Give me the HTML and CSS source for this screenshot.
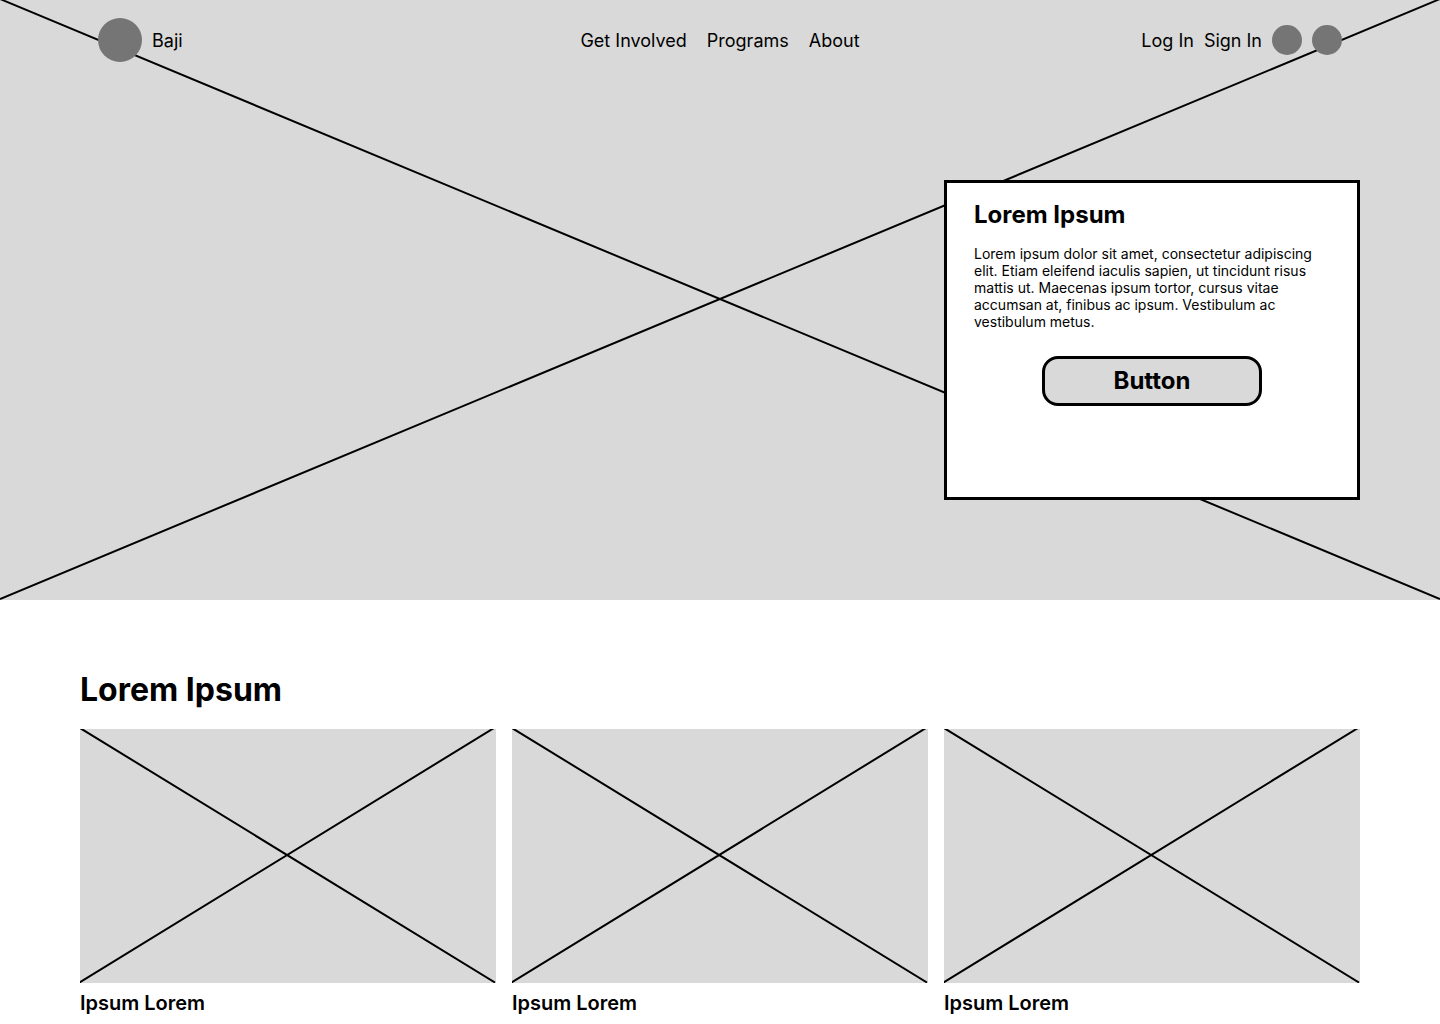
FILE: index.html
```html
<!DOCTYPE html>
<html lang="en">
<head>
<meta charset="utf-8">
<meta name="viewport" content="width=device-width, initial-scale=1">
<title>Baji</title>
<link rel="stylesheet" href="styles.css">
</head>
<body>
<div class="hero">
  <svg class="hero-image" viewBox="0 0 1440 600" preserveAspectRatio="none" aria-hidden="true">
    <path d="M0 -1L1440 599M0 599L1440 -1"/>
  </svg>
  <header class="site-header">
    <a class="brand" href="#"><span class="brand-logo"></span><span class="header-label">Baji</span></a>
    <nav class="main-nav" aria-label="Main">
      <a class="header-label" href="#">Get Involved</a>
      <a class="header-label" href="#">Programs</a>
      <a class="header-label" href="#">About</a>
    </nav>
    <div class="account">
      <a class="header-label" href="#">Log In</a>
      <a class="header-label" href="#">Sign In</a>
      <span class="dot"></span>
      <span class="dot"></span>
    </div>
  </header>
  <section class="promo">
    <h2 class="promo-title">Lorem Ipsum</h2>
    <p class="promo-text">Lorem ipsum dolor sit amet, consectetur adipiscing elit. Etiam eleifend iaculis sapien, ut tincidunt risus mattis ut. Maecenas ipsum tortor, cursus vitae accumsan at, finibus ac ipsum. Vestibulum ac vestibulum metus.</p>
    <button class="promo-button" type="button">Button</button>
  </section>
</div>
<main class="content">
  <h1 class="section-title">Lorem Ipsum</h1>
  <div class="cards">
    <article class="card">
      <svg class="card-image" viewBox="0 0 416 254" aria-hidden="true"><path d="M0 -1L415 253.5M-.5 253.5L414 -1"/></svg>
      <h3 class="card-title">Ipsum Lorem</h3>
    </article>
    <article class="card">
      <svg class="card-image" viewBox="0 0 416 254" aria-hidden="true"><path d="M0 -1L415 253.5M-.5 253.5L414 -1"/></svg>
      <h3 class="card-title">Ipsum Lorem</h3>
    </article>
    <article class="card">
      <svg class="card-image" viewBox="0 0 416 254" aria-hidden="true"><path d="M0 -1L415 253.5M-.5 253.5L414 -1"/></svg>
      <h3 class="card-title">Ipsum Lorem</h3>
    </article>
  </div>
</main>
</body>
</html>
```
FILE: styles.css
```css
* { box-sizing: border-box; }

body {
  margin: 0;
  background: #fff;
  color: #000;
  font-family: Inter, "Liberation Sans", sans-serif;
}

h1, h2, h3, p { margin: 0; }

a {
  color: inherit;
  text-decoration: none;
}

.hero {
  position: relative;
  isolation: isolate;
  display: flex;
  flex-direction: column;
  min-height: 600px;
  padding: 0 80px 100px;
  background: #d9d9d9;
}

.hero-image {
  position: absolute;
  inset: 0;
  z-index: -1;
  width: 100%;
  height: 100%;
}

.hero-image path,
.card-image path {
  fill: none;
  stroke: #000;
  stroke-width: 2;
}

.site-header {
  display: grid;
  grid-template-columns: 1fr auto 1fr;
  align-items: center;
  height: 80px;
  padding: 0 18px;
  font-size: 18px;
  line-height: 22px;
}

.header-label { padding-top: 2px; }

.brand,
.account {
  display: flex;
  align-items: center;
  gap: 10px;
}

.brand-logo {
  width: 44px;
  height: 44px;
  border-radius: 50%;
  background: #757575;
}

.main-nav {
  display: flex;
  gap: 20px;
}

.account { justify-content: flex-end; }

.dot {
  width: 30px;
  height: 30px;
  border-radius: 50%;
  background: #757575;
}

.promo {
  display: flex;
  flex-direction: column;
  align-self: flex-end;
  width: 416px;
  max-width: 100%;
  min-height: 320px;
  margin-top: 100px;
  padding: 17px 27px;
  border: 3px solid #000;
  background: #fff;
}

.promo-title {
  font-size: 24px;
  line-height: 30px;
}

.promo-text {
  margin-top: 15px;
  font-size: 14px;
  line-height: 17px;
}

.promo-button {
  align-self: center;
  width: 220px;
  height: 50px;
  margin-top: 26px;
  padding: 0;
  border: 3px solid #000;
  border-radius: 16px;
  background: #d9d9d9;
  color: #000;
  font: bold 24px/30px Inter, "Liberation Sans", sans-serif;
}

.content { padding: 70px 80px 8px; }

.section-title {
  font-size: 32px;
  line-height: 40px;
}

.cards {
  display: grid;
  grid-template-columns: repeat(3, 1fr);
  gap: 16px;
  margin-top: 19px;
}

.card-image {
  display: block;
  width: 100%;
  background: #d9d9d9;
}

.card-title {
  margin-top: 8px;
  font-size: 20px;
  font-weight: 600;
  line-height: 24px;
}
```
